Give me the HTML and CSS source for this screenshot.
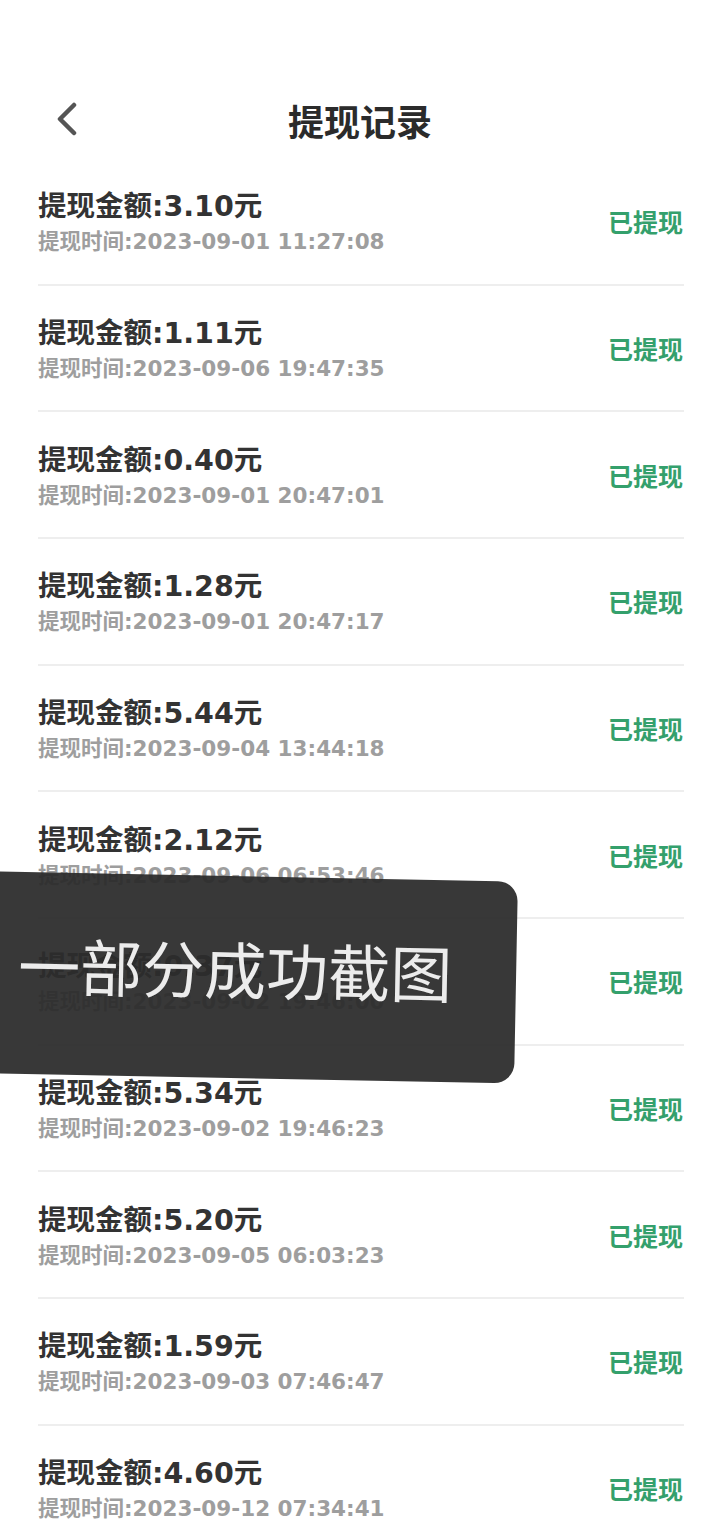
FILE: index.html
```html
<!DOCTYPE html>
<html lang="zh-CN">
<head>
    <meta charset="UTF-8">
    <meta name="viewport" content="width=device-width, initial-scale=1.0">
    <title>提现记录</title>
    <link rel="stylesheet" href="styles.css">
</head>
<body>
    <header class="topbar">
        <a class="back" href="#">
            <svg width="26" height="34" viewBox="0 0 26 34"><polyline points="20,3 6,17 20,31" fill="none" stroke="#555" stroke-width="4.5" stroke-linecap="round" stroke-linejoin="round"/></svg>
        </a>
        <h1 class="title">提现记录</h1>
    </header>

    <ul class="records">
        <li class="record"><div class="info"><div class="amount">提现金额:3.10元</div><div class="time">提现时间:2023-09-01 11:27:08</div></div><span class="status">已提现</span></li>
        <li class="record"><div class="info"><div class="amount">提现金额:1.11元</div><div class="time">提现时间:2023-09-06 19:47:35</div></div><span class="status">已提现</span></li>
        <li class="record"><div class="info"><div class="amount">提现金额:0.40元</div><div class="time">提现时间:2023-09-01 20:47:01</div></div><span class="status">已提现</span></li>
        <li class="record"><div class="info"><div class="amount">提现金额:1.28元</div><div class="time">提现时间:2023-09-01 20:47:17</div></div><span class="status">已提现</span></li>
        <li class="record"><div class="info"><div class="amount">提现金额:5.44元</div><div class="time">提现时间:2023-09-04 13:44:18</div></div><span class="status">已提现</span></li>
        <li class="record"><div class="info"><div class="amount">提现金额:2.12元</div><div class="time">提现时间:2023-09-06 06:53:46</div></div><span class="status">已提现</span></li>
        <li class="record"><div class="info"><div class="amount">提现金额:0.37元</div><div class="time">提现时间:2023-09-02 19:46:00</div></div><span class="status">已提现</span></li>
        <li class="record"><div class="info"><div class="amount">提现金额:5.34元</div><div class="time">提现时间:2023-09-02 19:46:23</div></div><span class="status">已提现</span></li>
        <li class="record"><div class="info"><div class="amount">提现金额:5.20元</div><div class="time">提现时间:2023-09-05 06:03:23</div></div><span class="status">已提现</span></li>
        <li class="record"><div class="info"><div class="amount">提现金额:1.59元</div><div class="time">提现时间:2023-09-03 07:46:47</div></div><span class="status">已提现</span></li>
        <li class="record"><div class="info"><div class="amount">提现金额:4.60元</div><div class="time">提现时间:2023-09-12 07:34:41</div></div><span class="status">已提现</span></li>
    </ul>

    <div class="toast">一部分成功截图</div>
</body>
</html>
```

FILE: styles.css
```css
body {
    margin: 0;
    background: #fff;
    font-family: "Noto Sans CJK SC", "Noto Sans", sans-serif;
    overflow: hidden;
}

.topbar {
    position: relative;
    height: 79px;
    margin-top: 80px;
    display: flex;
    align-items: center;
    justify-content: center;
}

.back {
    position: absolute;
    left: 54px;
    top: 22px;
    display: block;
    line-height: 0;
}

.title {
    margin: 0;
    font-size: 36px;
    font-weight: 700;
    color: #2b2b2b;
}

.records {
    list-style: none;
    margin: 0;
    padding: 0 36px 0 38px;
}

.record {
    height: 124.67px;
    display: flex;
    align-items: center;
    justify-content: space-between;
    border-bottom: 2px solid #eeeeee;
}

.info {
    display: flex;
    flex-direction: column;
    padding-top: 6px;
}

.amount {
    font-family: "DejaVu Sans", "Noto Sans CJK SC", sans-serif;
    font-size: 28.5px;
    line-height: 36px;
    font-weight: 700;
    color: #333;
}

.time {
    font-family: "DejaVu Sans", "Noto Sans CJK SC", sans-serif;
    font-size: 21.5px;
    line-height: 34px;
    font-weight: 700;
    color: #9e9e9e;
}

.status {
    font-size: 25px;
    font-weight: 700;
    color: #34a06c;
    margin-right: 1px;
}

.toast {
    position: absolute;
    left: -30px;
    top: 871px;
    width: 548px;
    height: 202px;
    box-sizing: border-box;
    padding: 0 0 20px 50px;
    display: flex;
    align-items: center;
    border-radius: 20px;
    background: rgba(44, 44, 44, 0.94);
    color: #ececec;
    font-size: 62px;
    font-weight: 400;
    transform: rotate(1.1deg);
    transform-origin: left top;
}
```
